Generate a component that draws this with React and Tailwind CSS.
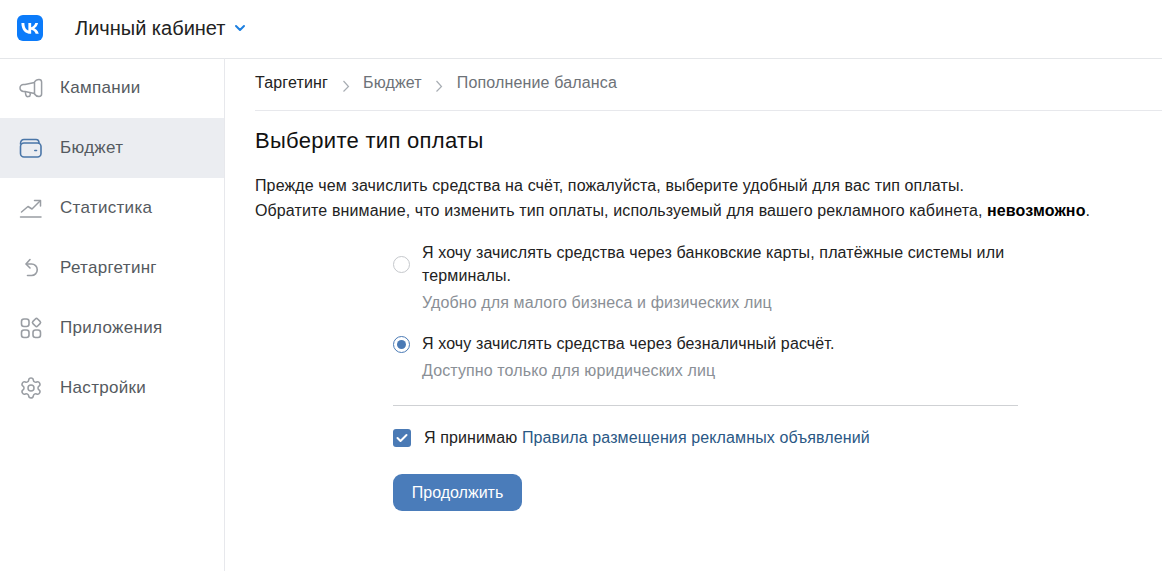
import React from "react";
import { Settings } from "lucide-react";

const Megaphone = () => (
  <svg width="24" height="24" viewBox="0 0 24 24" fill="none" stroke="currentColor" strokeWidth="1.5" strokeLinejoin="round" strokeLinecap="round">
    <path d="M15.5 6.5 L6 8.4 H4.5 a3.5 3.5 0 0 0 0 7 H6 L15.5 17.5 Z" />
    <path d="M15.5 6 Q17 3.4 20 3.4 Q22.6 3.4 22.6 6 V18 Q22.6 20.4 20 20.4 Q17 20.4 15.5 18" />
    <path d="M6.3 15.8 L6.8 19 a2.3 2.3 0 0 0 4.5 -.6 L11 16.8" />
  </svg>
);

const Wallet = () => (
  <svg width="24" height="24" viewBox="0 0 24 24" fill="none" stroke="currentColor" strokeWidth="1.6" strokeLinecap="round" strokeLinejoin="round">
    <path d="M1.5 8 C1.5 5 3 3.5 5 3.5 H17 C19 3.5 20 5 20 7" />
    <rect x="1.5" y="7" width="20.5" height="14" rx="3.5" />
    <path d="M15.8 14.5 H17.5" />
  </svg>
);

const Stats = () => (
  <svg width="24" height="24" viewBox="0 0 24 24" fill="none" stroke="currentColor" strokeWidth="1.5" strokeLinecap="round" strokeLinejoin="round">
    <path d="M2.5 16 L9 10.5 L13 13 L21 5" />
    <path d="M15.5 4.5 H21.5 V10" />
    <path d="M1.5 21 H22" />
  </svg>
);

const Undo = () => (
  <svg width="24" height="24" viewBox="0 0 24 24" fill="none" stroke="currentColor" strokeWidth="1.6" strokeLinecap="round" strokeLinejoin="round">
    <path d="M11 3.5 L7 8 L11 12" />
    <path d="M7.5 8 H12.5 a5.7 5.7 0 0 1 0 11.5 H8.5" />
  </svg>
);

const Apps = () => (
  <svg width="24" height="24" viewBox="0 0 24 24" fill="none" stroke="currentColor" strokeWidth="1.6" strokeLinejoin="round">
    <rect x="2.5" y="3" width="7.5" height="7.5" rx="2.5" />
    <rect x="14.2" y="3.2" width="6.6" height="6.6" rx="1.6" transform="rotate(45 17.5 6.5)" />
    <rect x="2.5" y="14" width="7.5" height="7.5" rx="2.5" />
    <rect x="14" y="14" width="7.5" height="7.5" rx="2.5" />
  </svg>
);

const items = [
  { label: "Кампании", icon: <Megaphone /> },
  { label: "Бюджет", icon: <Wallet />, active: true },
  { label: "Статистика", icon: <Stats /> },
  { label: "Ретаргетинг", icon: <Undo /> },
  { label: "Приложения", icon: <Apps /> },
  { label: "Настройки", icon: <Settings size={24} strokeWidth={1.5} /> },
];

const Sep = () => (
  <svg width="8" height="12" viewBox="0 0 8 12" fill="none" stroke="#a8adb3" strokeWidth="1.2" className="mt-1.5">
    <path d="M1.5 1 L6.5 6.5 L1.5 11.5" />
  </svg>
);

export default function App() {
  return (
    <div className="h-[571px] w-[1162px] overflow-hidden bg-white font-['Liberation_Sans',Arial,sans-serif]">
      <header className="flex h-[59px] items-center border-b border-[#e4e6e9] pb-[2px] pl-[17px]">
        <svg width="26" height="26" viewBox="0 0 48 48">
          <rect width="48" height="48" rx="11" fill="#0b7bfa" />
          <path
            fill="#fff"
            d="M25.54 34.58c-10.94 0-17.18-7.5-17.44-19.98h5.48c.18 9.16 4.22 13.04 7.42 13.84V14.6h5.16v7.9c3.16-.34 6.48-3.94 7.6-7.9h5.16c-.86 4.88-4.46 8.48-7.02 9.96 2.56 1.2 6.66 4.34 8.22 10.02h-5.68c-1.22-3.8-4.26-6.74-8.28-7.14v7.14h-.62z"
          />
        </svg>
        <span className="ml-8 text-[20px] text-[#222]">Личный кабинет</span>
        <svg width="12" height="8" viewBox="0 0 12 8" fill="none" stroke="#1d7fe0" strokeWidth="2" strokeLinecap="round" strokeLinejoin="round" className="ml-[9px]">
          <path d="M2 2 L6 6 L10 2" />
        </svg>
      </header>
      <div className="flex h-[512px]">
        <aside className="-mt-px w-[225px] shrink-0 border-r border-[#e7e8ec]">
          {items.map((item) => (
            <div
              key={item.label}
              className={`flex h-[60px] items-center pl-[19px] text-[17px] tracking-[0.3px] text-[#555a60] ${item.active ? "bg-[#ebedf1]" : ""}`}
            >
              <span className={`w-[41px] ${item.active ? "text-[#4a76a8]" : "text-[#999da3]"}`}>{item.icon}</span>
              <span>{item.label}</span>
            </div>
          ))}
        </aside>
        <main className="flex-1 pl-[30px]">
          <div className="flex h-[52px] items-center gap-[13.5px] border-b border-[#e7e8ec] pb-[4px] text-[16px] tracking-[0.15px] text-[#6d7278]">
            <span className="text-[#222]">Таргетинг</span>
            <Sep />
            <span>Бюджет</span>
            <Sep />
            <span>Пополнение баланса</span>
          </div>
          <h1 className="mt-[16px] text-[22px] leading-[28px] tracking-[0.3px] text-[#111]">Выберите тип оплаты</h1>
          <p className="mt-[18px] text-[16px] leading-[25px] tracking-[0.12px] text-[#222]">
            Прежде чем зачислить средства на счёт, пожалуйста, выберите удобный для вас тип оплаты.
            <br />
            Обратите внимание, что изменить тип оплаты, используемый для вашего рекламного кабинета, <b className="text-black">невозможно</b>.
          </p>
          <div className="ml-[138px] mt-[18px] w-[625px] text-[16px] tracking-[0.12px]">
            <div className="flex items-start gap-[12px]">
              <span className="mt-[15px] h-[17px] w-[17px] shrink-0 rounded-full border border-[#c5c8cc] bg-white" />
              <div className="leading-[23px] text-[#222]">
                Я хочу зачислять средства через банковские карты, платёжные системы или
                <br />
                терминалы.
                <div className="mt-[4px] leading-[24px] text-[#8a8f96]">Удобно для малого бизнеса и физических лиц</div>
              </div>
            </div>
            <div className="mt-[17px] flex items-start gap-[12px]">
              <span className="mt-[4px] flex h-[17px] w-[17px] shrink-0 items-center justify-center rounded-full border border-[#4a7ab5] bg-white">
                <span className="h-[9px] w-[9px] rounded-full bg-[#4a7ab5]" />
              </span>
              <div className="leading-[24px] text-[#222]">
                Я хочу зачислять средства через безналичный расчёт.
                <div className="mt-[3px] text-[#8a8f96]">Доступно только для юридических лиц</div>
              </div>
            </div>
            <div className="mt-[22px] h-px bg-[#cfd1d4]" />
            <div className="mt-[22px] flex items-center gap-[13px] leading-[20px] text-[#222]">
              <span className="flex h-[18px] w-[18px] items-center justify-center rounded-[3px] bg-[#4a7ab5]">
                <svg width="12" height="10" viewBox="0 0 12 10" fill="none" stroke="white" strokeWidth="2" strokeLinecap="round" strokeLinejoin="round">
                  <path d="M1.5 5 L4.5 8 L10.5 2" />
                </svg>
              </span>
              <span>
                Я принимаю <span className="text-[#2a5885]">Правила размещения рекламных объявлений</span>
              </span>
            </div>
            <button className="mt-[26px] h-[37px] w-[129px] rounded-[9px] bg-[#4a7cba] text-[16px] tracking-normal text-white">Продолжить</button>
          </div>
        </main>
      </div>
    </div>
  );
}
